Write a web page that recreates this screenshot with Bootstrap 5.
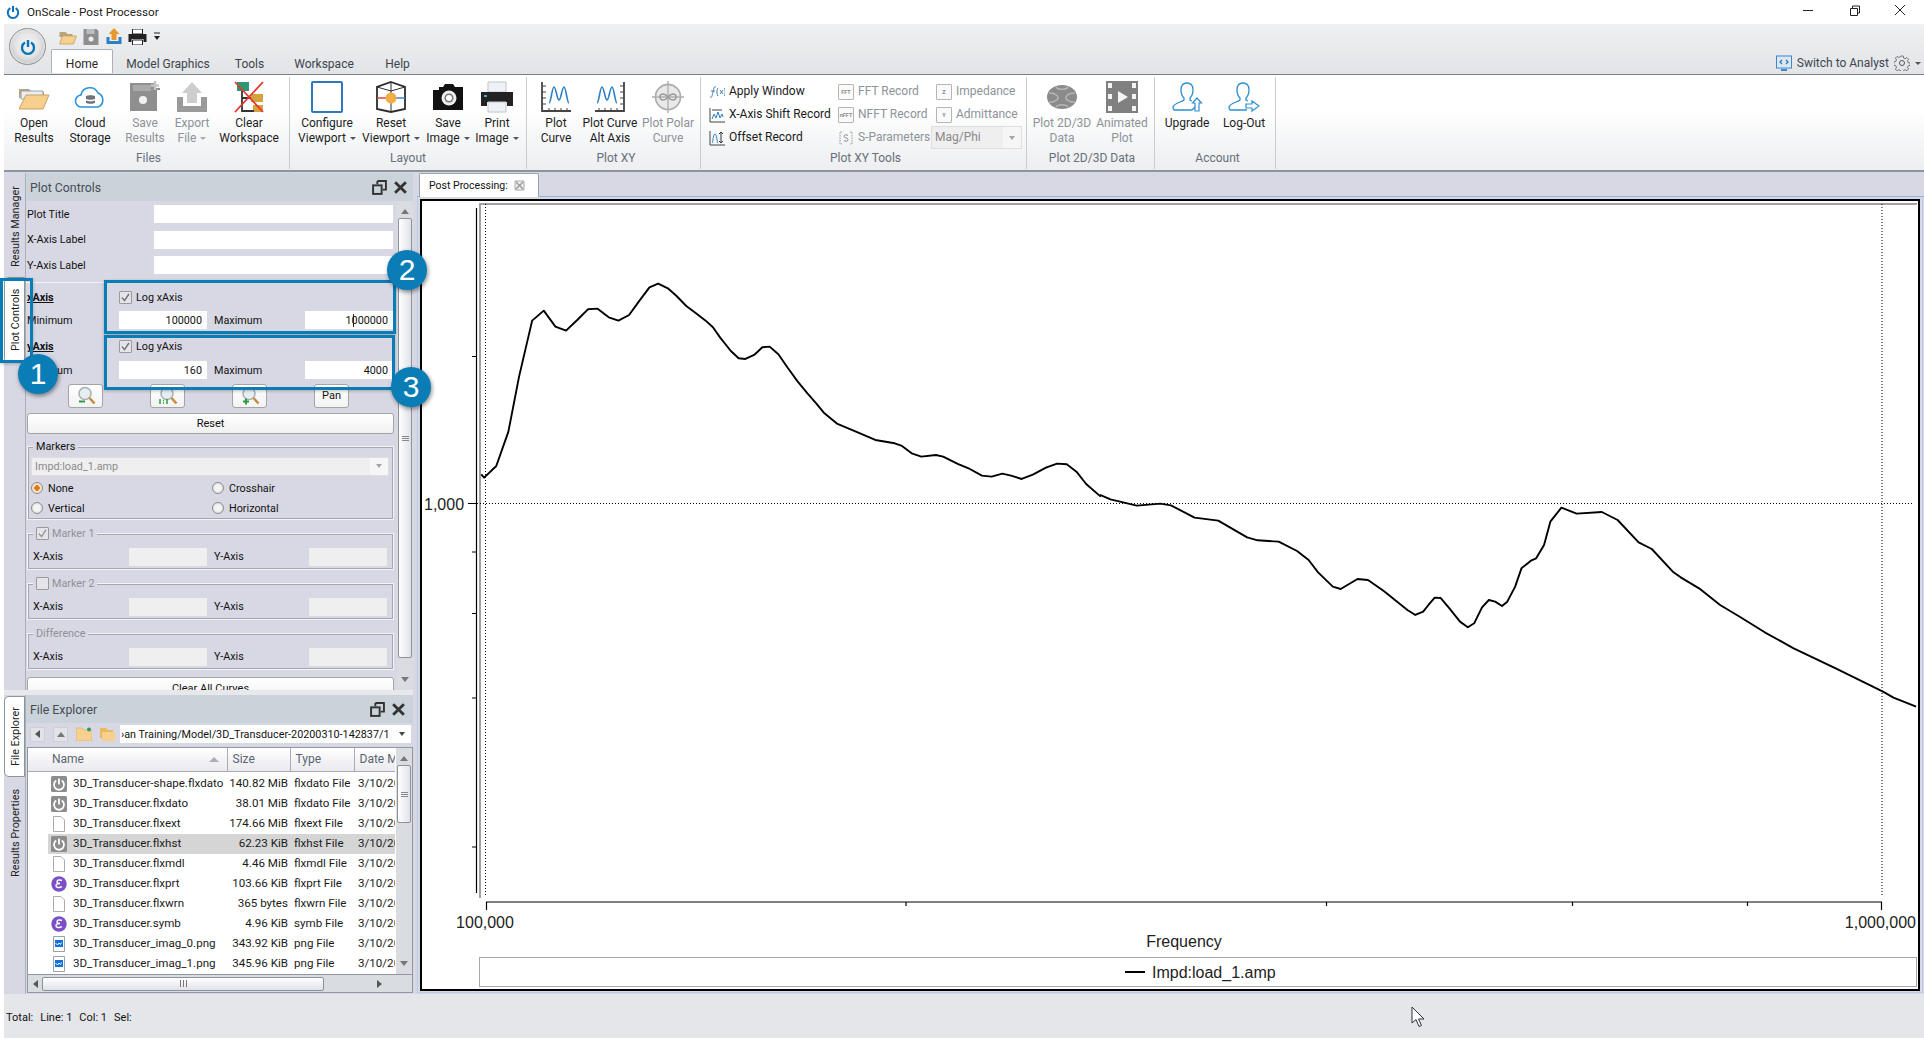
<!DOCTYPE html>
<html lang="en">
<head>
<meta charset="utf-8">
<title>OnScale - Post Processor</title>
<link href="https://cdn.jsdelivr.net/npm/bootstrap@5.3.0/dist/css/bootstrap.min.css" rel="stylesheet">
<script src="https://cdn.jsdelivr.net/npm/bootstrap@5.3.0/dist/js/bootstrap.bundle.min.js"></script>
<style>
html,body{margin:0;width:1924px;height:1040px;overflow:hidden}
body{--ui:Roboto,"Noto Sans",sans-serif;font-family:var(--ui);font-size:12px;line-height:15px;color:#1a1a1a;background:#fff;position:relative}
.pw-c{color:#0a74b8}
.win-title{height:24px;padding-left:6px;gap:7px;font-size:11.7px;color:#222}
.win-btns{margin-left:auto;margin-right:1px;flex:none}
.win-btn{width:46px;height:24px;flex:none}
.app-frame{margin-left:4px;height:1016px}
/* ribbon head */
.rh{height:51px;background:linear-gradient(#eef0f2,#e2e4e7);border-bottom:1px solid #77818b}
.orb{width:37px;height:37px;margin:4px 0 0 5px;border-radius:50%;border:1px solid #8f8f8f;background:radial-gradient(circle at 50% 45%,#f2f2f2 0,#e6e6e6 45%,#a8a8a8 100%);box-shadow:inset 0 0 3px #fff;flex:none}
.qat{height:25px;padding-left:11px}
.qat-i{width:23px}
.rtabs{display:grid;grid-template-columns:62px 110px 53px 96px 51px;height:24px;margin-left:5px;border:0;flex-wrap:nowrap}
.rtabs .nav-link{padding:7px 0 0;border:1px solid transparent;border-bottom:0;border-radius:2px 2px 0 0;color:#3c444c;background:none;text-align:center;font-size:12px;line-height:15px;height:24px;margin:0}
.rtabs .nav-link.active{background:#fff;border-color:#aab1b8;color:#2a2a2a}
.sw-analyst{margin-left:auto;gap:5px;padding:4px 3px 0 0;height:24px;color:#3d4650}
.sw-analyst .crt{margin-left:0}
.rcol{min-width:0}
/* ribbon body */
.rb{height:97px;background:linear-gradient(#fff 0,#fff 35%,#eceef0 100%);border-bottom:2px solid #8d959c}
.rg{border-right:1px solid #c8ccd1;margin-top:2px;height:92px}
.rg-items{display:grid;height:74px}
.rg-cap{text-align:center;color:#66707a;height:17px;line-height:15px}
.rg-files{width:286px;padding-left:4px}.rg-files .rg-items{grid-template-columns:52px 60px 50px 44px 70px}
.rg-layout{width:237px}.rg-layout .rg-items{grid-template-columns:74px 54px 60px 38px}
.rg-xy{width:174px;padding-left:5px}.rg-xy .rg-items{grid-template-columns:48px 60px 56px}
.rg-tools{width:326px;padding-left:4px}.rg-tools .rg-items{grid-template-columns:129px 98px 90px;grid-template-rows:23px 23px 23px;padding-top:3px;height:74px}
.rg-2d{width:128px;padding-left:3px}.rg-2d .rg-items{grid-template-columns:64px 56px}
.rg-acct{width:121px;padding-left:5px}.rg-acct .rg-items{grid-template-columns:54px 60px}
.bigb{padding:4px 0 0;text-align:center;line-height:15px;white-space:nowrap;color:#1d1d1d;display:flex;flex-direction:column;align-items:center;overflow:visible}
.bigb svg{width:32px;height:32px;margin-bottom:3px;flex:none}
.off{color:#8d9298}
.crt{display:inline-block;border:3px solid transparent;border-top:3px solid #555;border-bottom:0;margin-left:4px;vertical-align:middle}
.off .crt{border-top-color:#aaa}
.smb{gap:4px;white-space:nowrap;align-items:center;padding-left:4px}
.smb svg,.tiny-box{width:16px;height:16px;flex:none}
.tiny-box{border:1px solid #b5b5b5;border-radius:1px;font-size:5.5px;line-height:14px;text-align:center;color:#8b8b8b;font-weight:700;background:#fafafa;overflow:hidden}
.combo{background:#efefef;border:1px solid #dedede;color:#8a8a8a;align-items:center;padding-left:3px}
.combo-arrow{margin-left:auto;width:18px;height:100%;background:#f6f6f6;display:flex;align-items:center;justify-content:center}
.dn{display:block;border:3.5px solid transparent;border-top:4px solid #a5a5a5;border-bottom:0}
.dn-dark{border:4px solid transparent;border-top:5px solid #777;border-bottom:0}
.up{display:block;border:4px solid transparent;border-bottom:5px solid #777;border-top:0}
.lt{display:block;border:4px solid transparent;border-right:5px solid #555;border-left:0}
.rt{display:block;border:4px solid transparent;border-left:5px solid #555;border-right:0}
.combo-rb{margin:0 0 0 -1px;height:23px}
/* workspace */
.wsp{height:822px;background:#d8d8e4}
.left-dock{width:409px;background:#d8d8e4}
.dock-a{height:518px;padding-top:1px}
.dock-gap{height:5px;background:#e6e8ec}
.dock-b{height:299px}
.rail{width:21px;flex:none;background:#d8d8e4}
.rail-tab{writing-mode:vertical-rl;transform:rotate(180deg);text-align:center;font-size:10.8px;width:21px;line-height:24px;color:#222;display:block;white-space:nowrap}
.rail-on{background:#fff;border:1px solid #8c949c;border-radius:0 5px 5px 0;line-height:22px}
.rt-rm{height:95px;margin-top:6px}
.rt-pc{height:86px;margin-top:3px}
.rt-fe{height:81px;margin-top:1px}
.rt-rp{height:93px;margin-top:10px}
.dpanel{flex:1;min-width:0;border-left:1px solid #a9b0b7;background:#d8d8e4;overflow:hidden}
.dhead{height:28px;background:#cbd3da;padding:0 5px 0 4px;color:#454c54;font-size:12.3px}
.dhead>span{padding-top:2px}
.dhead-b{padding-right:7px}
.dhead-btns{margin-left:auto;gap:6px;align-items:center}
.pc-wrap{height:489px;overflow:hidden}
.pc-body{width:370px;padding:4px 0 0 1px;color:#111;font-size:10.8px;flex:none}
.sb-v{width:16px;margin-left:1px;background:#d9dde2;display:flex;flex-direction:column;align-items:center;position:relative;flex:none}
.thumb{background:linear-gradient(90deg,#fff,#dfe2e8);border:1px solid #8c929b;border-radius:2px;display:flex;align-items:center;justify-content:center}
.sb-main{width:14px;height:440px}
.sb-list{width:14px;height:58px}
.grip-h{display:block;width:7px;height:5px;border-top:1px solid #888;border-bottom:1px solid #888;position:relative}
.grip-h::after{content:"";position:absolute;left:0;right:0;top:1px;height:1px;background:#888}
.grip-v{display:block;width:7px;height:7px;border-left:1px solid #777;border-right:1px solid #777;position:relative}
.grip-v::after{content:"";position:absolute;top:0;bottom:0;left:2px;width:1px;background:#777}
.pc-row{height:18px;margin-bottom:7.5px;display:grid;grid-template-columns:127px 239px;align-items:center}
.pc-in.form-control{height:18px;min-height:18px;padding:1px 5px 0;border:0;border-radius:0;background:#fff;font-size:10.8px;line-height:17px;text-align:right;color:#111}
.pc-in.form-control:disabled{background:#efefef}
.pc-sep{border-top:1px solid #f2f2f6;margin:0 0 7px -1px}
.ax-grid{display:grid;grid-template-columns:92px 88px 98px 88px;align-items:center}
.ax-h{height:12px;margin-bottom:9.500px}
.ax-v{height:18px;margin-bottom:10px}
.ax-v.last{margin-bottom:5px}
.ax-title{font-weight:700;text-decoration:underline}
.ax-v>span{padding-top:1px}
.pc-ck.form-check-input{width:13px;height:13px;margin:0;border-radius:1px;border:1px solid #9a9a9a;background-color:#e4e4ea;flex:none;opacity:1;float:none;display:block}
.ck-wrap{position:relative;width:13px;height:13px;flex:none}
.ck-wrap svg{position:absolute;left:1px;top:1px;width:11px;height:11px;pointer-events:none}
.ck-line{gap:4px;grid-column:2 / 4}
.val-cell{padding-left:7px}
.tbtns{display:grid;grid-template-columns:35px 35px 35px 35px;justify-content:start;column-gap:47px;margin:0 0 5px 41px;height:24px}
.tbtn.btn{height:24px;padding:0;border:1px solid #a4a4a4;border-radius:3px;background:linear-gradient(#fff,#f3f3f3);font-size:11px;line-height:20px;color:#111;display:flex;align-items:center;justify-content:center}
.tbtn svg{width:20px;height:20px}
.wbtn.btn{display:block;width:367px;height:21px;padding:0;border:1px solid #a4a4a4;border-radius:3px;background:linear-gradient(#fff,#f1f1f3);font-size:11px;line-height:19px;color:#111;margin-bottom:12px}
.wbtn.clip{margin:7px 0 0;height:24px;border-radius:3px 3px 0 0;line-height:20px}
.gbox{border:1px solid #f4f4f8;outline:1px solid #a6a6ae;outline-offset:-2px;position:relative;width:367px;margin-bottom:13px}
.gbox.last{margin-bottom:0}
.gleg{position:absolute;left:5px;top:-8px;background:#d8d8e4;padding:0 3px;display:flex;align-items:center;gap:3px;height:15px;line-height:15px}
.gleg.off{color:#8f9096}
.g-mark{height:74px;padding:10px 3px 0}
.g-sub{padding:11px 0 0 5px;display:grid;grid-template-columns:96px 78px 7px 95px 78px;align-items:center;height:37px}
.g-sub>span,.g-sub>input{grid-row:1}
.g-sub .in-a{grid-column:2}
.g-sub .lbl2{grid-column:4}
.g-sub .in-b{grid-column:5}
.mark-combo{height:19px;width:358px;margin-bottom:5px}
.radgrid{display:grid;grid-template-columns:181px 170px;row-gap:5px;line-height:15px}
.radgrid label{display:flex;align-items:center;gap:5px;height:15px}
.rd{width:12px;height:12px;border-radius:50%;border:1px solid #8d8d8d;background:radial-gradient(circle,#f4f4f4 40%,#cfcfcf 100%);flex:none;display:block}
.rd-on{background:radial-gradient(circle,#e07a10 0 36%,#f2e3cf 42% 100%)}
/* file explorer */
.path-row{height:24px;padding:2px 1px 4px 4px;align-items:center}
.navb{width:15px;height:15px;background:#e2e3e8;border:1px solid #cfd0d6;margin-right:8px;display:flex;align-items:center;justify-content:center;flex:none}
.path-i{width:16px;height:14px;flex:none;margin-right:7px}
.path-box{width:291px;margin-left:-2px;height:18px;background:#fff;align-items:center;overflow:hidden;position:relative;white-space:nowrap;padding-left:1px;color:#111;font-size:10.8px}
.path-box .dn{border-top-color:#444;margin-left:auto;margin-right:6px}
.fx{border:1px solid #8f98a2;height:246px;margin-left:1px;width:386px;background:#fff;overflow:hidden;display:flex;flex-direction:column}
.fx-main{height:226px;display:flex}
.fx-t{width:367px;overflow:hidden;flex:none}
.fx-table.table{table-layout:fixed;width:367px;margin:0;--bs-table-bg:transparent;font-size:11.6px;color:#1a1a1a;border-collapse:collapse}
.fx-c1{width:199px}.fx-c2{width:63px}.fx-c3{width:64px}.fx-c4{width:41px}
.fx-table th{height:23px;padding:1px 0 0 5px;font-weight:400;color:#5a6570;background:linear-gradient(#fff,#e9e9ef);border:0;border-right:1px solid #a8adb5;border-bottom:1px solid #a8adb5;white-space:nowrap;overflow:hidden;position:relative;line-height:15px;vertical-align:middle;font-size:12px}
.fx-table th:first-child{padding-left:24px}
.fx-table td{height:20px;padding:0;border:0;white-space:nowrap;overflow:hidden;vertical-align:middle;background:none;box-shadow:none;line-height:15px}
.fx-table tbody tr:first-child td{padding-top:2px;height:22px}
.fx-table td:nth-child(2){text-align:right;padding-right:2px}
.fx-table td:nth-child(3){padding-left:4px}
.fx-table td:nth-child(4){padding-left:4px}
.fx-name{display:flex;align-items:center;gap:6px;margin-left:20px;padding-left:3px;height:20px}
.fx-name svg{width:16px;height:16px;flex:none}
.fx-sel .fx-name{background:#d5d5d5}
.fx-sel td:not(:first-child){background:#d5d5d5}
.hsort{position:absolute;right:8px;top:9px;border:5px solid transparent;border-bottom:5px solid #a9afb8;border-top:0}
.sb-h{height:18px;background:#d9dde2;display:flex;align-items:center;border-top:1px solid #8f98a2}
.sb-h .lt{margin-left:5px}
.sb-h .thumb{width:282px;height:14px;margin-left:4px;background:linear-gradient(#fff,#dfe2e8)}
.sb-h .rt{margin-left:53px}
/* document */
.doc{flex:1;min-width:0;padding:1px 0 0 4px}
.dtabs{height:24px;border-bottom:1px solid #90b4e4;padding-left:2px;flex-wrap:nowrap}
.dtab{width:120px;height:24px;background:#fff;border:1px solid #9aa2aa;border-bottom:0;border-radius:2px 2px 0 0;display:flex;align-items:center;padding-left:9px;gap:6px;font-size:10.5px;color:#111}
.dtab svg{width:11px;height:11px}
.plot-out{height:796px;padding:2px 2px 2px 2px;border:1px solid #b7cdea;border-top:0;margin-right:1px}
.plot-box{border:2px solid #000;background:#fff;height:792px}
.plot-box svg{display:block;font-family:"Liberation Sans",Arial,sans-serif}
.status{height:44px;background:#e4e6ea;padding:16px 0 0 2px;gap:7px;font-size:11px;line-height:15px;color:#111}
/* overlay callouts */
.cbox{position:absolute;border:3.5px solid #0a7db7;box-shadow:0 1px 3px rgba(0,0,0,.25);pointer-events:none}
.cb1{left:0;top:278px;width:33px;height:85px}
.cb2{left:104px;top:280px;width:292px;height:54px}
.cb3{left:104px;top:335px;width:291px;height:55px}
.cnum{position:absolute;width:40px;height:40px;border-radius:50%;background:#0a7db7;color:#fff;font-family:"Liberation Sans",Arial,sans-serif;font-size:30px;line-height:40px;text-align:center;box-shadow:1px 2px 4px rgba(0,0,0,.45)}
.cn1{left:18px;top:354px}.cn2{left:387px;top:250px}.cn3{left:391px;top:367px}
.pointer{position:absolute;left:1411px;top:1006px;width:15px;height:22px}
.txcaret{position:absolute;left:353px;top:314px;width:1px;height:13px;background:#222}
</style>
</head>
<body>
<svg width="0" height="0" class="d-block position-absolute">
 <defs>
  <symbol id="pw" viewBox="0 0 16 16"><path d="M5 3.6a6 6 0 1 0 6 0" fill="none" stroke="currentColor" stroke-width="2.3"/><path d="M8 1v7" stroke="currentColor" stroke-width="2.4"/></symbol>
  <symbol id="f-pw" viewBox="0 0 16 16"><rect width="16" height="16" rx="1.5" fill="#8d8d8d"/><path d="M5.2 4.6a5 5 0 1 0 5.6 0" fill="none" stroke="#fff" stroke-width="1.8"/><path d="M8 2.5v6" stroke="#fff" stroke-width="1.8"/></symbol>
  <symbol id="f-doc" viewBox="0 0 16 16"><path d="M2.5 .5h7.5l3.5 3.500v11.500h-11z" fill="#fff" stroke="#a9adb2"/></symbol>
  <symbol id="f-sig" viewBox="0 0 16 16"><circle cx="8" cy="8" r="7.700" fill="#7b4fc6"/><path d="M11 4.500c-2-1-5-.6-5 1.300 0 1.300 1.500 1.700 3 1.700-2 0-4 .6-4 2.200 0 2 3.500 2.300 6 1" fill="none" stroke="#fff" stroke-width="1.500"/></symbol>
  <symbol id="f-png" viewBox="0 0 16 16"><path d="M2.500.5h11v15h-11z" fill="#fff" stroke="#9aa2ad"/><rect x="4" y="4" width="8" height="7" fill="#1072d8"/><path d="M4.500 7l2 2 1.500-2 1.500 1.500 1-2" fill="none" stroke="#fff"/></symbol>
  <symbol id="pgr" viewBox="0 0 14 14"><path d="M5 1h8v8h-3" fill="none" stroke="#333" stroke-width="1.800"/><path d="M5 1v3" stroke="#333" stroke-width="1.800"/><rect x="1" y="5" width="8" height="8" fill="none" stroke="#333" stroke-width="1.800"/></symbol>
  <symbol id="pcl" viewBox="0 0 14 14"><path d="M2 2l10 10M12 2L2 12" stroke="#333" stroke-width="2.600"/></symbol>
  <symbol id="mag" viewBox="0 0 20 20"><circle cx="9" cy="7.500" r="6" fill="#e7eef2" stroke="#a5b0b5" stroke-width="1.500"/><path d="M13.500 12l5 5.500" stroke="#c98c3d" stroke-width="2.600"/></symbol>
 </defs>
</svg>

<div class="win-title d-flex align-items-center">
 <svg width="14" height="14" class="pw-c"><use href="#pw"/></svg>
 <span>OnScale - Post Processor</span>
 <div class="win-btns d-flex">
  <svg class="win-btn" viewBox="0 0 46 24"><path d="M18 10.500h10" stroke="#222"/></svg>
  <svg class="win-btn" viewBox="0 0 46 24"><path d="M19.500 8.500h7v7h-7zM21.500 8V6h7v7h-2" fill="none" stroke="#222"/></svg>
  <svg class="win-btn" viewBox="0 0 46 24"><path d="M18 5l10 10M28 5L18 15" stroke="#222"/></svg>
 </div>
</div>

<div class="app-frame d-flex flex-column">
 <!-- ribbon head -->
 <div class="rh d-flex">
  <div class="orb d-flex align-items-center justify-content-center"><svg width="16" height="16" class="pw-c"><use href="#pw"/></svg></div>
  <div class="rcol flex-grow-1 d-flex flex-column">
   <div class="qat d-flex align-items-center">
    <svg class="qat-i" height="16" viewBox="0 0 22 16"><path d="M2 3h6l2 2h5v3H2z" fill="#b9a47c"/><path d="M5 7h14l-3 8H2z" fill="#f6d08c" stroke="#c9a163" stroke-width=".8"/></svg>
    <svg class="qat-i" height="16" viewBox="0 0 22 16"><path d="M3 0h13l2 2v14H3z" fill="#8e8e8e"/><rect x="6" y="0" width="8" height="5" fill="#bdbdbd"/><circle cx="10.500" cy="10" r="2.500" fill="#eee"/></svg>
    <svg class="qat-i" height="17" viewBox="0 0 22 17"><path d="M3 9v7h15V9h-3v4H6V9z" fill="#2f7fc4"/><path d="M10.500 0l5.500 6h-3v6H8V6H5z" fill="#e8992c"/></svg>
    <svg class="qat-i" height="16" viewBox="0 0 22 16"><path d="M6 0h10v5H6z" fill="#fff" stroke="#222"/><path d="M2 5h18v8h-3v-3H5v3H2z" fill="#222"/><path d="M6 11h10v5H6z" fill="#fff" stroke="#222"/></svg>
    <svg width="10" height="12" viewBox="0 0 10 12" class="ms-1"><path d="M1 2h6" stroke="#222"/><path d="M1 5h6L4 9z" fill="#222"/></svg>
   </div>
   <div class="d-flex">
    <ul class="nav nav-tabs rtabs">
     <li class="nav-item"><a class="nav-link active" href="#">Home</a></li>
     <li class="nav-item"><a class="nav-link" href="#">Model Graphics</a></li>
     <li class="nav-item"><a class="nav-link" href="#">Tools</a></li>
     <li class="nav-item"><a class="nav-link" href="#">Workspace</a></li>
     <li class="nav-item"><a class="nav-link" href="#">Help</a></li>
    </ul>
    <div class="sw-analyst d-flex align-items-center">
     <svg width="16" height="16" viewBox="0 0 16 16"><rect x=".5" y="1" width="15" height="12" fill="#dbe8f5" stroke="#3d86c9"/><path d="M5 15h6" stroke="#3d86c9" stroke-width="2"/><path d="M6 5L4 7l2 2M10 5l2 2-2 2" fill="none" stroke="#2f6fb0" stroke-width="1.200"/></svg>
     <span>Switch to Analyst</span>
     <svg width="16" height="16" viewBox="0 0 16 16"><circle cx="8" cy="8" r="2.500" fill="none" stroke="#555"/><path d="M6.800 1h2.400l.4 2 1.600.7 1.700-1.100 1.700 1.700-1.100 1.700.7 1.600 2 .4v2.400l-2 .4-.7 1.600 1.100 1.700-1.700 1.700-1.700-1.100-1.600.7-.4 2H6.800l-.4-2-1.600-.7-1.700 1.100-1.700-1.700 1.100-1.700-.7-1.600-2-.4V6.800l2-.4.700-1.600L1.400 3.100l1.700-1.700 1.700 1.100 1.600-.7z" fill="none" stroke="#666" stroke-width=".9"/></svg>
     <span class="crt"></span>
    </div>
   </div>
  </div>
 </div>
 <!-- ribbon body -->
 <div class="rb d-flex">
  <div class="rg rg-files">
   <div class="rg-items">
    <div class="bigb"><svg viewBox="0 0 32 32"><path d="M1 8h10l3 3h12v6H1z" fill="#b9a47c"/><path d="M3 10h22v8H3z" fill="#e9eef5" stroke="#9aa4b4"/><path d="M8 14h23l-6 14H1z" fill="#f6d08c" stroke="#c9a163"/></svg><span>Open<br>Results</span></div>
    <div class="bigb"><svg viewBox="0 0 32 32"><path d="M8 26a6 6 0 0 1-1-12 9 9 0 0 1 17-2 7.500 7.500 0 0 1 0 14z" fill="#fff" stroke="#2b93d9" stroke-width="1.600"/><path d="M12 15c2-1 7-1 9 0v3c-2 1-7 1-9 0zM12 19.500c2 1 7 1 9 0v2.500c-2 1-7 1-9 0z" fill="#6d747b"/></svg><span>Cloud<br>Storage</span></div>
    <div class="bigb off"><svg viewBox="0 0 32 32"><path d="M1 2h24v5h6v2h-3v21H1z" fill="#8f8f8f"/><path d="M4 4h18v6H4z" fill="#a9a9a9"/><circle cx="14" cy="19" r="4" fill="#f2f2f2"/><path d="M26 0v9M22 4.500h8" stroke="#c5c5c5" stroke-width="2.400"/></svg><span>Save<br>Results</span></div>
    <div class="bigb off"><svg viewBox="0 0 32 32"><path d="M1 16h6v9h18v-9h6v15H1z" fill="#9a9a9a"/><path d="M16 1l10 11h-5v10H11V12H6z" fill="#cdcdcd"/></svg><span>Export<br>File<i class="crt"></i></span></div>
    <div class="bigb"><svg viewBox="0 0 32 32"><rect x="4" y="1" width="12" height="9" fill="#2e9772"/><rect x="18" y="13" width="12" height="8" fill="#d6a23e"/><rect x="20" y="24" width="10" height="7" fill="#d6a23e"/><path d="M9 10v20h12M9 17h9" fill="none" stroke="#333" stroke-width="1.800"/><path d="M2 1l28 30M30 1L2 31" stroke="#e5372e" stroke-width="1.800"/></svg><span>Clear<br>Workspace</span></div>
   </div>
   <div class="rg-cap">Files</div>
  </div>
  <div class="rg rg-layout">
   <div class="rg-items">
    <div class="bigb"><svg viewBox="0 0 32 32"><rect x="1" y="1" width="30" height="30" rx="1" fill="#fff" stroke="#2f78bd" stroke-width="2"/></svg><span>Configure<br>Viewport<i class="crt"></i></span></div>
    <div class="bigb"><svg viewBox="0 0 32 32"><path d="M16 1L30 6v22l-14 3L2 28V6z" fill="#fff" stroke="#2c2c2c" stroke-width="1.800"/><path d="M2 6l14 4 14-4M16 1v30" fill="none" stroke="#2c2c2c"/><path d="M2 17h12" stroke="#d8403a" stroke-width="1.500"/><path d="M18 17h12" stroke="#3c86cf" stroke-width="1.500"/><circle cx="16" cy="17" r="5.500" fill="#f2ad47"/></svg><span>Reset<br>Viewport<i class="crt"></i></span></div>
    <div class="bigb"><svg viewBox="0 0 32 32"><path d="M1 9h6V6h4l2-3h8l2 3h8v23H1z" fill="#111"/><circle cx="17" cy="17" r="7.500" fill="#eee"/><circle cx="17" cy="17" r="4.500" fill="#777"/><circle cx="17" cy="17" r="3" fill="#fff"/></svg><span>Save<br>Image<i class="crt"></i></span></div>
    <div class="bigb"><svg viewBox="0 0 32 32"><path d="M7 1h18v10H7z" fill="#eef2f6" stroke="#bfc6cc"/><path d="M0 11h32v14h-6v-4H6v4H0z" fill="#222"/><rect x="3" y="14" width="3" height="2" fill="#35b0e0"/><path d="M7 21h18v10H7z" fill="#eef2f6" stroke="#bfc6cc"/></svg><span>Print<br>Image<i class="crt"></i></span></div>
   </div>
   <div class="rg-cap">Layout</div>
  </div>
  <div class="rg rg-xy">
   <div class="rg-items">
    <div class="bigb"><svg viewBox="0 0 32 32"><path d="M2 1v29h29" fill="none" stroke="#444" stroke-width="1.800"/><path d="M2 5h4M2 11h4M2 17h4M2 23h4M9 30v-3M15 30v-3M21 30v-3M27 30v-3" stroke="#444"/><path d="M9 22c2 0 3-16 5-16s3 13 5 13 3-13 5-13 3 16 5 16" fill="none" stroke="#2f7fc4" stroke-width="1.600"/></svg><span>Plot<br>Curve</span></div>
    <div class="bigb"><svg viewBox="0 0 32 32"><path d="M30 1v29H1" fill="none" stroke="#444" stroke-width="1.800"/><path d="M30 5h-4M30 11h-4M30 17h-4M30 23h-4M5 30v-3M11 30v-3M17 30v-3M23 30v-3" stroke="#444"/><path d="M3 22c2 0 3-16 5-16s3 13 5 13 3-13 5-13 3 16 5 16" fill="none" stroke="#2f7fc4" stroke-width="1.600"/></svg><span>Plot Curve<br>Alt Axis</span></div>
    <div class="bigb off"><svg viewBox="0 0 32 32"><circle cx="16" cy="16" r="12.500" fill="#e9e9e9" stroke="#b0b0b0" stroke-width="1.800"/><path d="M16 0v32M0 16h32" stroke="#b0b0b0" stroke-width="1.400"/><path d="M16 16c-3-4-8-4-8 0s5 4 8 0 8-4 8 0-5 4-8 0" fill="none" stroke="#9a9a9a" stroke-width="1.400"/></svg><span>Plot Polar<br>Curve</span></div>
   </div>
   <div class="rg-cap">Plot XY</div>
  </div>
  <div class="rg rg-tools">
   <div class="rg-items">
    <div class="smb d-flex"><svg viewBox="0 0 16 16"><path d="M1 13c2 1 2-1 3-5s1-6 3-5M2 7h4M9 4c-1.500 2-1.500 6 0 8M11 6l3 4M14 6l-3 4M15.500 4c1 2 1 6 0 8" fill="none" stroke="#2f6fb0" stroke-width=".9"/></svg><span>Apply Window</span></div>
    <div class="smb d-flex off"><span class="tiny-box">FFT</span><span>FFT Record</span></div>
    <div class="smb d-flex off"><span class="tiny-box">Z</span><span>Impedance</span></div>
    <div class="smb d-flex"><svg viewBox="0 0 16 16"><path d="M1 1v14h15" fill="none" stroke="#444"/><path d="M3 3h10" stroke="#444"/><path d="M3 12l2-5 2 4 2-6 2 6 2-4 1 3" fill="none" stroke="#2f7fc4"/></svg><span>X-Axis Shift Record</span></div>
    <div class="smb d-flex off"><span class="tiny-box">nFFT</span><span>NFFT Record</span></div>
    <div class="smb d-flex off"><span class="tiny-box">Y</span><span>Admittance</span></div>
    <div class="smb d-flex"><svg viewBox="0 0 16 16"><path d="M1 1v14h15" fill="none" stroke="#444"/><path d="M3 13c1 0 1-9 3-9s2 9 3 9" fill="none" stroke="#2f7fc4"/><path d="M12 2v11M10 4l2-2 2 2M10 11l2 2 2-2" fill="none" stroke="#333"/></svg><span>Offset Record</span></div>
    <div class="smb d-flex off"><svg viewBox="0 0 16 16"><path d="M4 2H2v12h2M12 2h2v12h-2" fill="none" stroke="#999" stroke-dasharray="1.500 1"/><path d="M10 5.500c-1-1-4-1-4 .8s4 1.400 4 3.400-3 1.800-4 .8" fill="none" stroke="#888"/></svg><span>S-Parameters</span></div>
    <div class="combo combo-rb d-flex off"><span>Mag/Phi</span><span class="combo-arrow"><i class="dn"></i></span></div>
   </div>
   <div class="rg-cap">Plot XY Tools</div>
  </div>
  <div class="rg rg-2d">
   <div class="rg-items">
    <div class="bigb off"><svg viewBox="0 0 32 32"><ellipse cx="16" cy="16" rx="15" ry="12" fill="#8b8b8b"/><path d="M3 12c6 0 8 2 9 4s-4 6-9 5M29 12c-6 0-8 2-9 4s4 6 9 5M10 6c2 3 10 3 12 0M10 26c2-3 10-3 12 0" fill="none" stroke="#b5b5b5" stroke-width="1.500"/></svg><span>Plot 2D/3D<br>Data</span></div>
    <div class="bigb off"><svg viewBox="0 0 32 32"><rect width="32" height="32" fill="#808080"/><path d="M2 2h4v5H2zM2 13h4v5H2zM2 25h4v5H2zM26 2h4v5h-4zM26 13h4v5h-4zM26 25h4v5h-4z" fill="#f4f4f4"/><path d="M12 10l10 6-10 6z" fill="#f4f4f4"/></svg><span>Animated<br>Plot</span></div>
   </div>
   <div class="rg-cap">Plot 2D/3D Data</div>
  </div>
  <div class="rg rg-acct">
   <div class="rg-items">
    <div class="bigb"><svg viewBox="0 0 32 32"><path d="M16 2c-4 0-6 3-6 7 0 3 1 6 3 8v2c-2 2-10 3-11 7 0 3 1 3 3 3h16l3-3" fill="none" stroke="#2e90d1" stroke-width="1.300"/><path d="M16 2c4 0 6 3 6 7 0 3-1 6-3 8v2l2 1" fill="none" stroke="#2e90d1" stroke-width="1.300"/><path d="M26 17l4.500 5h-2.500v8h-4v-8h-2.500z" fill="#fff" stroke="#2e90d1" stroke-width="1.200"/></svg><span>Upgrade</span></div>
    <div class="bigb"><svg viewBox="0 0 32 32"><path d="M15 2c-4 0-6 3-6 7 0 3 1 6 3 8v2c-2 2-10 3-11 7 0 3 1 3 3 3h15" fill="none" stroke="#2e90d1" stroke-width="1.300"/><path d="M15 2c4 0 6 3 6 7 0 3-1 6-3 8v2l2 1" fill="none" stroke="#2e90d1" stroke-width="1.300"/><path d="M24 20l7 5-7 5v-3h-6v-4h6z" fill="#fff" stroke="#2e90d1" stroke-width="1.200"/></svg><span>Log-Out</span></div>
   </div>
   <div class="rg-cap">Account</div>
  </div>
 </div>
 <!-- workspace -->
 <div class="wsp d-flex">
  <div class="left-dock">
   <div class="dock-a d-flex">
    <div class="rail">
     <span class="rail-tab rt-rm">Results Manager</span>
     <span class="rail-tab rail-on rt-pc">Plot Controls</span>
    </div>
    <div class="dpanel">
     <div class="dhead d-flex align-items-center"><span>Plot Controls</span><div class="dhead-btns d-flex"><svg width="15" height="15"><use href="#pgr"/></svg><svg width="15" height="15"><use href="#pcl"/></svg></div></div>
     <div class="pc-wrap d-flex">
      <form class="pc-body">
       <div class="pc-row"><span>Plot Title</span><input class="form-control pc-in" aria-label="Plot Title"></div>
       <div class="pc-row"><span>X-Axis Label</span><input class="form-control pc-in" aria-label="X-Axis Label"></div>
       <div class="pc-row"><span>Y-Axis Label</span><input class="form-control pc-in" aria-label="Y-Axis Label"></div>
       <div class="pc-sep"></div>
       <div class="ax-grid ax-h"><span class="ax-title">xAxis</span><label class="ck-line d-flex align-items-center"><span class="ck-wrap"><input type="checkbox" class="form-check-input pc-ck" checked disabled><svg viewBox="0 0 11 11"><path d="M2 5.500l2.500 3L9 2" fill="none" stroke="#777" stroke-width="1.600"/></svg></span>Log xAxis</label></div>
       <div class="ax-grid ax-v"><span>Minimum</span><input class="form-control pc-in" value="100000"><span class="val-cell">Maximum</span><input class="form-control pc-in" value="1000000"></div>
       <div class="ax-grid ax-h"><span class="ax-title">yAxis</span><label class="ck-line d-flex align-items-center"><span class="ck-wrap"><input type="checkbox" class="form-check-input pc-ck" checked disabled><svg viewBox="0 0 11 11"><path d="M2 5.500l2.500 3L9 2" fill="none" stroke="#777" stroke-width="1.600"/></svg></span>Log yAxis</label></div>
       <div class="ax-grid ax-v last"><span>Minimum</span><input class="form-control pc-in" value="160"><span class="val-cell">Maximum</span><input class="form-control pc-in" value="4000"></div>
       <div class="tbtns">
        <button type="button" class="btn tbtn"><svg viewBox="0 0 20 20"><use href="#mag"/><path d="M3 15.500h6" stroke="#2e9a45" stroke-width="2"/></svg></button>
        <button type="button" class="btn tbtn"><svg viewBox="0 0 20 20"><use href="#mag"/><path d="M2 13v5M5 14.500h1M5 17h1M9 13v5" stroke="#2e9a45" stroke-width="1.500"/></svg></button>
        <button type="button" class="btn tbtn"><svg viewBox="0 0 20 20"><use href="#mag"/><path d="M3 15.500h6M6 12.500v6" stroke="#2e9a45" stroke-width="2"/></svg></button>
        <button type="button" class="btn tbtn">Pan</button>
       </div>
       <button type="button" class="btn wbtn">Reset</button>
       <div class="gbox g-mark">
        <div class="gleg">Markers</div>
        <div class="combo mark-combo d-flex"><span>Impd:load_1.amp</span><span class="combo-arrow"><i class="dn"></i></span></div>
        <div class="radgrid">
         <label><i class="rd rd-on"></i>None</label><label><i class="rd"></i>Crosshair</label>
         <label><i class="rd"></i>Vertical</label><label><i class="rd"></i>Horizontal</label>
        </div>
       </div>
       <div class="gbox g-sub">
        <div class="gleg off"><span class="ck-wrap"><input type="checkbox" class="form-check-input pc-ck" checked disabled><svg viewBox="0 0 11 11"><path d="M2 5.500l2.500 3L9 2" fill="none" stroke="#999" stroke-width="1.600"/></svg></span>Marker 1</div>
        <span>X-Axis</span><input class="form-control pc-in in-a" disabled aria-label="Marker 1 X"><span class="lbl2">Y-Axis</span><input class="form-control pc-in in-b" disabled aria-label="Marker 1 Y">
       </div>
       <div class="gbox g-sub">
        <div class="gleg off"><span class="ck-wrap"><input type="checkbox" class="form-check-input pc-ck" disabled></span>Marker 2</div>
        <span>X-Axis</span><input class="form-control pc-in in-a" disabled aria-label="Marker 2 X"><span class="lbl2">Y-Axis</span><input class="form-control pc-in in-b" disabled aria-label="Marker 2 Y">
       </div>
       <div class="gbox g-sub last">
        <div class="gleg off">Difference</div>
        <span>X-Axis</span><input class="form-control pc-in in-a" disabled aria-label="Difference X"><span class="lbl2">Y-Axis</span><input class="form-control pc-in in-b" disabled aria-label="Difference Y">
       </div>
       <button type="button" class="btn wbtn clip">Clear All Curves</button>
      </form>
      <div class="sb-v">
       <i class="up mt-2"></i>
       <span class="thumb mt-1 sb-main"><i class="grip-h"></i></span>
       <i class="dn dn-dark mt-auto mb-2"></i>
      </div>
     </div>
    </div>
   </div>
   <div class="dock-gap"></div>
   <div class="dock-b d-flex">
    <div class="rail">
     <span class="rail-tab rail-on rt-fe">File Explorer</span>
     <span class="rail-tab rt-rp">Results Properties</span>
    </div>
    <div class="dpanel">
     <div class="dhead dhead-b d-flex align-items-center"><span>File Explorer</span><div class="dhead-btns d-flex"><svg width="15" height="15"><use href="#pgr"/></svg><svg width="15" height="15"><use href="#pcl"/></svg></div></div>
     <div class="path-row d-flex">
      <span class="navb"><i class="lt"></i></span>
      <span class="navb"><i class="up"></i></span>
      <svg class="path-i" viewBox="0 0 16 14"><path d="M0 1h6l2 2h8v11H0z" fill="#f6d08c" stroke="#d7ad6a" stroke-width=".6"/><circle cx="13" cy="2.500" r="2" fill="#2e9772"/></svg>
      <svg class="path-i" viewBox="0 0 16 14"><path d="M1 1h6l2 2h5v8H1z" fill="#e8b95f"/><path d="M3 5h13v9H3z" fill="#f6d08c"/></svg>
      <div class="path-box d-flex"><span>›an Training/Model/3D_Transducer-20200310-142837/1</span><i class="dn"></i></div>
     </div>
     <div class="fx">
      <div class="fx-main">
       <div class="fx-t">
        <table class="table fx-table">
         <colgroup><col class="fx-c1"><col class="fx-c2"><col class="fx-c3"><col class="fx-c4"></colgroup>
         <thead><tr><th>Name<i class="hsort"></i></th><th>Size</th><th>Type</th><th>Date M</th></tr></thead>
         <tbody>
          <tr><td><div class="fx-name"><svg><use href="#f-pw"/></svg>3D_Transducer-shape.flxdato</div></td><td>140.82 MiB</td><td>flxdato File</td><td>3/10/20</td></tr>
          <tr><td><div class="fx-name"><svg><use href="#f-pw"/></svg>3D_Transducer.flxdato</div></td><td>38.01 MiB</td><td>flxdato File</td><td>3/10/20</td></tr>
          <tr><td><div class="fx-name"><svg><use href="#f-doc"/></svg>3D_Transducer.flxext</div></td><td>174.66 MiB</td><td>flxext File</td><td>3/10/20</td></tr>
          <tr class="fx-sel"><td><div class="fx-name"><svg><use href="#f-pw"/></svg>3D_Transducer.flxhst</div></td><td>62.23 KiB</td><td>flxhst File</td><td>3/10/20</td></tr>
          <tr><td><div class="fx-name"><svg><use href="#f-doc"/></svg>3D_Transducer.flxmdl</div></td><td>4.46 MiB</td><td>flxmdl File</td><td>3/10/20</td></tr>
          <tr><td><div class="fx-name"><svg><use href="#f-sig"/></svg>3D_Transducer.flxprt</div></td><td>103.66 KiB</td><td>flxprt File</td><td>3/10/20</td></tr>
          <tr><td><div class="fx-name"><svg><use href="#f-doc"/></svg>3D_Transducer.flxwrn</div></td><td>365 bytes</td><td>flxwrn File</td><td>3/10/20</td></tr>
          <tr><td><div class="fx-name"><svg><use href="#f-sig"/></svg>3D_Transducer.symb</div></td><td>4.96 KiB</td><td>symb File</td><td>3/10/20</td></tr>
          <tr><td><div class="fx-name"><svg><use href="#f-png"/></svg>3D_Transducer_imag_0.png</div></td><td>343.92 KiB</td><td>png File</td><td>3/10/20</td></tr>
          <tr><td><div class="fx-name"><svg><use href="#f-png"/></svg>3D_Transducer_imag_1.png</div></td><td>345.96 KiB</td><td>png File</td><td>3/10/20</td></tr>
         </tbody>
        </table>
       </div>
       <div class="sb-v">
        <i class="up mt-2"></i>
        <span class="thumb mt-1 sb-list"><i class="grip-h"></i></span>
        <i class="dn dn-dark mt-auto mb-2"></i>
       </div>
      </div>
      <div class="sb-h"><i class="lt"></i><span class="thumb"><i class="grip-v"></i></span><i class="rt"></i></div>
     </div>
    </div>
   </div>
  </div>
  <div class="doc">
   <ul class="dtabs d-flex list-unstyled mb-0">
    <li class="dtab"><span>Post Processing:</span><svg viewBox="0 0 11 11"><path d="M1 1h9v9H1z" fill="#eee" stroke="#aaa"/><path d="M2 2l7 7M9 2l-7 7" stroke="#999" stroke-width="1.400"/></svg></li>
   </ul>
   <div class="plot-out">
    <div class="plot-box">
     <svg width="1496" height="788" viewBox="422 201 1496 788">
      <path d="M480 204H1917" stroke="#a2a2a2" stroke-width="2"/>
      <path d="M480 203V898" stroke="#a2a2a2" stroke-width="2"/>
      <path d="M476.500 208V893" stroke="#000" stroke-width="1.200"/>
      <path d="M472 356.500h4.500M468 503.500h8.500M472 552h4.500M472 613.500h4.500M472 698h4.500M472 847h4.500" stroke="#000"/>
      <path d="M485.500 204V895M1882 204V895M468 503.500H1914" stroke="#000" stroke-dasharray="1 2"/>
      <path d="M486 902H1882M486.500 902v8M906 902v4M1326.500 902v4M1572.500 902v4M1747.500 902v4M1881.500 902v8" stroke="#000" stroke-width="1.200" fill="none"/>
      <g transform="translate(410 170) scale(.4847 .3333)">
       <polyline fill="none" stroke="#000" stroke-width="1.900" vector-effect="non-scaling-stroke" stroke-linejoin="round" points="147,913 153,923 178,888 203,785 225,620 252,452 276,422 300,470 322,482 345,450 367,418 387,416 410,442 430,452 452,435 472,395 494,352 512,341 532,355 550,378 570,408 590,430 610,452 625,472 640,503 662,543 678,565 692,567 710,555 727,532 742,530 760,553 780,595 800,635 820,670 838,700 855,730 882,762 920,785 960,810 1000,820 1015,828 1035,850 1055,860 1085,855 1100,860 1130,882 1155,897 1180,917 1200,920 1222,911 1240,917 1262,927 1285,914 1312,893 1335,881 1355,883 1375,905 1395,942 1425,980"/>
      </g>
      <g transform="translate(1100 400) scale(.5255 .3333)">
       <polyline fill="none" stroke="#000" stroke-width="1.900" vector-effect="non-scaling-stroke" stroke-linejoin="round" points="0,285 20,298 70,317 115,311 135,316 180,353 225,362 280,412 300,421 340,425 375,453 397,480 415,517 443,560 458,567 490,537 510,540 540,573 585,630 600,645 615,635 625,615 637,593 648,594 665,625 685,665 700,682 712,670 727,622 740,600 752,605 765,618 775,605 790,560 802,505 820,482 830,475 845,435 857,365 878,323 907,341 955,336 985,360 1025,427 1050,447 1090,515 1105,532 1140,565 1180,615 1215,648 1265,697 1320,745 1400,805 1490,875 1510,893 1553,920"/>
      </g>
      <g font-size="16" fill="#222">
       <text x="424" y="510">1,000</text>
       <text x="485" y="928" text-anchor="middle">100,000</text>
       <text x="1916" y="928" text-anchor="end">1,000,000</text>
       <text x="1184" y="947" text-anchor="middle">Frequency</text>
       <text x="1152" y="978">Impd:load_1.amp</text>
      </g>
      <rect x="479.500" y="957.500" width="1437" height="29" fill="none" stroke="#a8a8a8"/>
      <path d="M1125 972h20" stroke="#000" stroke-width="2"/>
     </svg>
    </div>
   </div>
  </div>
 </div>
 <div class="status d-flex"><span>Total:</span><span>Line: 1</span><span>Col: 1</span><span>Sel:</span></div>
</div>

<span class="txcaret"></span>
<div class="cbox cb1"></div><div class="cbox cb2"></div><div class="cbox cb3"></div>
<div class="cnum cn1">1</div><div class="cnum cn2">2</div><div class="cnum cn3">3</div>
<svg class="pointer" viewBox="0 0 15 22"><path d="M1 1v16l4-3.500 3 7 2.500-1-3-6.500h5.500z" fill="#fff" stroke="#2a3038"/></svg>
</body>
</html>
